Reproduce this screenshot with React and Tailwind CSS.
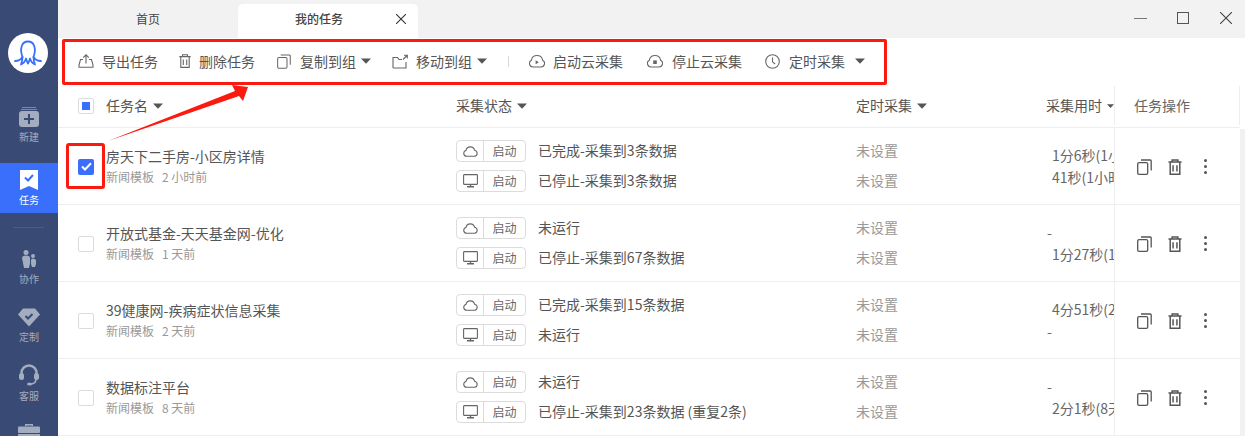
import React from "react";

const font = { fontFamily: '"Noto Sans CJK SC", "Noto Sans", sans-serif' };
const Caret = ({ className = "" }) => (
  <svg width="10" height="6" viewBox="0 0 10 6" className={className}><path d="M0 0.5h10L5 5.8z" fill="#555" /></svg>
);
const S = ({ w = 16, h = 16, vb = "0 0 16 16", children, className = "", c = "#666", sw = 1.1 }) => (
  <svg width={w} height={h} viewBox={vb} fill="none" stroke={c} strokeWidth={sw} className={`shrink-0 ${className}`}>{children}</svg>
);
const Export = () => <S><path d="M5 6.5H2.5L1 12v2.2h14V12l-1.5-5.5H11" /><path d="M8 10.5V2M5.2 4.6 8 1.8l2.8 2.8" /></S>;
const Trash = ({ w = 12, h = 14, c, sw }) => <S w={w} h={h} vb="0 0 12 14" c={c} sw={sw}><path d="M0.3 2.6h11.4M3.5 2.2V0.8h5v1.4M1.8 3v10.4h8.4V3M4.3 5.5v5.5M7.7 5.5v5.5" /></S>;
const Copy = ({ w = 15, h = 16, c, sw }) => <S w={w} h={h} vb="0 0 15 16" c={c} sw={sw}><rect x="0.7" y="3.7" width="10" height="11.6" rx="1.4" /><path d="M4 1h9.2a1 1 0 0 1 1 1v9.5" /></S>;
const Folder = () => <S w={16} h={15} vb="0 0 16 15"><path d="M1 14V3.5h4.5l1.5 2h3M1 14h13V8" /><path d="M11 5.5 15 1.5M12 1.2h3.3v3.3" /></S>;
const cloudPath = "M4 14A3.6 3.6 0 0 1 2.4 7.2 5.7 5.7 0 0 1 13.6 7.2 3.6 3.6 0 0 1 12 14z";
const CloudPlay = () => <S><path d={cloudPath} /><path d="M6.6 7.2v4l3.2-2z" fill="#666" stroke="none" /></S>;
const CloudStop = () => <S><path d={cloudPath} /><rect x="6.2" y="7.4" width="3.6" height="3.6" fill="#666" stroke="none" /></S>;
const Clock = () => <S w={15} h={15} vb="0 0 15 15"><circle cx="7.5" cy="7.5" r="6.8" /><path d="M7.5 3.5v4.3l2.6 2.2" /></S>;
const Cloud = () => <S w={15} h={11} vb="0 0 15 11"><path d="M3.6 10.3A3 3 0 0 1 3 4.4 4.4 4.4 0 0 1 11.6 4.2 3.1 3.1 0 0 1 11.6 10.3z" /></S>;
const Monitor = () => <S w={15} h={14} vb="0 0 15 14"><rect x="0.6" y="0.6" width="13.8" height="9.8" rx="0.6" /><path d="M4 12.8h7M7.5 10.5v2.3" strokeWidth="1.4" /></S>;

const Tool = ({ icon, label, caret, className, gap = "ml-2" }) => (
  <div className={`flex items-center ${className}`}>
    {icon}
    <span className={gap}>{label}</span>
    {caret && <Caret className="ml-[5px]" />}
  </div>
);

const NavItem = ({ icon, label, className = "", active }) => (
  <div className={`flex flex-col items-center shrink-0 ${active ? "bg-[#3a6ffb] text-white" : "text-[#a4acc0]"} ${className}`}>
    {icon}
    <span className="text-[10px] leading-[12px] mt-[4px]">{label}</span>
  </div>
);

const Pill = ({ kind, label }) => (
  <div className="flex items-center h-[22px] w-[70px] border border-[#dcdcdc] rounded-[4px] shrink-0">
    <div className="w-[27px] h-full flex items-center justify-center border-r border-[#dcdcdc]">{kind === "cloud" ? <Cloud /> : <Monitor />}</div>
    <div className="flex-1 text-center text-[12px] text-[#666]">{label}</div>
  </div>
);

const rows = [
  { name: "房天下二手房-小区房详情", sub: "新闻模板", age: "2 小时前", checked: true, s1: "已完成-采集到3条数据", s2: "已停止-采集到3条数据", t1: "1分6秒(1小时)", t2: "41秒(1小时)" },
  { name: "开放式基金-天天基金网-优化", sub: "新闻模板", age: "1 天前", s1: "未运行", s2: "已停止-采集到67条数据", t1: "-", t2: "1分27秒(1小时)" },
  { name: "39健康网-疾病症状信息采集", sub: "新闻模板", age: "2 天前", s1: "已完成-采集到15条数据", s2: "未运行", t1: "4分51秒(2小时)", t2: "-" },
  { name: "数据标注平台", sub: "新闻模板", age: "8 天前", s1: "未运行", s2: "已停止-采集到23条数据 (重复2条)", t1: "-", t2: "2分1秒(8天)" },
];

const TimeLine = ({ v }) => <div className={`h-[22px] leading-[22px] whitespace-nowrap ${v === "-" ? "pl-px" : "pl-[6px]"}`}>{v}</div>;

const Row = ({ r }) => (
  <div className="flex h-[77px] border-b border-[#eeeeee] text-[14px] text-[#555]">
    <div className="w-[28px] ml-[20px] flex items-center shrink-0 pt-[1px]">
      {r.checked ? (
        <div className="w-[16px] h-[16px] rounded-[2px] bg-[#3a6ffb] flex items-center justify-center">
          <svg width="11" height="9" viewBox="0 0 11 9" fill="none" stroke="#fff" strokeWidth="2"><path d="M1 4.5 4 7.5 10 1.2" /></svg>
        </div>
      ) : (
        <div className="w-[16px] h-[16px] rounded-[2px] border border-[#dcdcdc] bg-white" />
      )}
    </div>
    <div className="w-[350px] shrink-0 pt-[18px]">
      <div className="leading-[20px]">{r.name}</div>
      <div className="mt-[1px] text-[12px] leading-[20px] text-[#999] flex">
        <span>{r.sub}</span><span className="ml-[8px]">{r.age}</span>
      </div>
    </div>
    <div className="w-[400px] shrink-0 pt-[12px] flex flex-col gap-[8px]">
      <div className="flex items-center"><Pill kind="cloud" label="启动" /><span className="ml-[12px] relative -top-px">{r.s1}</span></div>
      <div className="flex items-center"><Pill kind="pc" label="启动" /><span className="ml-[12px] relative -top-px">{r.s2}</span></div>
    </div>
    <div className="w-[190px] shrink-0 pt-[12px] flex flex-col gap-[10px] text-[#999]">
      <div className="h-[20px] leading-[20px]">未设置</div>
      <div className="h-[20px] leading-[20px]">未设置</div>
    </div>
    <div className="w-[68px] shrink-0 overflow-hidden pt-[16px] flex flex-col text-[#666]">
      <TimeLine v={r.t1} />
      <TimeLine v={r.t2} />
    </div>
    <div className="w-[126px] shrink-0 bg-white border-l border-[#eeeeee] flex items-center pl-[22px] pt-[1px]">
      <Copy c="#555" sw={1.3} />
      <span className="ml-[16px] flex"><Trash w={14} h={16} c="#555" sw={1.3} /></span>
      <span className="ml-[22px] flex flex-col gap-[3px]">
        <i className="block w-[3px] h-[3px] bg-[#555] rounded-full" />
        <i className="block w-[3px] h-[3px] bg-[#555] rounded-full" />
        <i className="block w-[3px] h-[3px] bg-[#555] rounded-full" />
      </span>
    </div>
  </div>
);

export default function App() {
  return (
    <div className="relative w-[1245px] h-[436px] overflow-hidden flex bg-white" style={font}>
      <aside className="w-[58px] shrink-0 bg-[#394a74] flex flex-col items-stretch">
        <div className="mt-[33px] mx-[8px] w-[40px] h-[40px] shrink-0 rounded-full bg-white flex items-center justify-center">
          <svg width="28" height="26" viewBox="0 0 28 26" fill="none" stroke="#3a6ffb" strokeWidth="1.800" strokeLinejoin="round" strokeLinecap="round">
            <path d="M8.500 17C5.500 9 7.500 1.500 14 1.500S22.500 9 19.500 17" />
            <path d="M1 21c3.500 0 6-1.500 7.500-4 0 3-.5 5-1.500 7.500 2.500-1 4-3 5-6 .5 2 1.200 3.500 2 5 .8-1.500 1.500-3 2-5 1 3 2.500 5 5 6-1-2.500-1.500-4.500-1.500-7.500 1.500 2.500 4 4 7.500 4" />
          </svg>
        </div>
        <NavItem className="mt-[34px]" label="新建" icon={
          <svg width="20" height="20" viewBox="0 0 20 20" className="block"><path d="M3 0h14v1H3zM2 2h16v1H2z" fill="#7d88a6" /><rect y="4" width="20" height="16" rx="3" fill="#a4acc0" /><path d="M10 7v10M5 12h10" stroke="#394a74" strokeWidth="2" /></svg>
        } />
        <NavItem active className="mt-[20px] h-[50px] pt-[7px]" label="任务" icon={
          <svg width="18" height="20" viewBox="0 0 18 20" className="block"><path d="M0 0h18v20l-9-4-9 4z" fill="#fff" /><path d="M5 7.500 8 10.500 13 5" stroke="#3a6ffb" strokeWidth="2" fill="none" /></svg>
        } />
        <div className="mt-[14px] mx-[14px] h-px shrink-0 bg-[#4d5d85]" />
        <NavItem className="mt-[22px]" label="协作" icon={
          <svg width="14" height="18" viewBox="0 0 14 18" className="block mb-px" fill="#a4acc0"><circle cx="4" cy="2.500" r="2.500" /><path d="M0 8q0-2.500 4-2.500t4 2.500v5l-1 5H2l-1-5z" /><circle cx="11" cy="6" r="2" /><path d="M9 10q0-1.500 2-1.500t3 1.500v4l-1 3h-3l-1-3z" /></svg>
        } />
        <NavItem className="mt-[23px]" label="定制" icon={
          <svg width="22" height="19" viewBox="0 0 22 18" className="block"><path d="M5 0h12l5 6-11 12L0 6z" fill="#a4acc0" strokeLinejoin="round" /><path d="M7.500 7.500 10 10l4.500-4.500" stroke="#394a74" strokeWidth="2" fill="none" /></svg>
        } />
        <NavItem className="mt-[21px]" label="客服" icon={
          <svg width="20" height="22" viewBox="0 0 20 22" className="block" fill="none"><path d="M2.500 12V9a7.500 7.500 0 0 1 15 0v3" stroke="#a4acc0" strokeWidth="2.500" /><rect x="0" y="9" width="5" height="7" rx="2.500" fill="#a4acc0" /><rect x="15" y="9" width="5" height="7" rx="2.500" fill="#a4acc0" /><path d="M17 15c0 4-3 5-6 5" stroke="#a4acc0" strokeWidth="1.500" /><ellipse cx="10.500" cy="20" rx="2.500" ry="1.500" fill="#a4acc0" /></svg>
        } />
        <div className="mt-[21px] flex justify-center shrink-0">
          <svg width="22" height="20" viewBox="0 0 22 20" fill="#a4acc0" className="block"><path d="M7 3V1h8v2h-1.500V2.500h-5V3z" /><rect y="3.500" width="22" height="6.500" rx="1" /><rect y="11" width="22" height="9" /></svg>
        </div>
      </aside>

      <main className="flex-1 min-w-0 flex flex-col">
        <div className="h-[38px] bg-[#f2f2f2] flex items-end shrink-0 text-[12px] text-[#444]">
          <div className="w-[180px] h-[34px] flex items-center justify-center pb-[4px]">首页</div>
          <div className="w-[180px] h-[34px] bg-white rounded-t-[5px] flex items-center relative pb-[4px]">
            <span className="ml-[57px] font-medium">我的任务</span>
            <svg width="10" height="10" viewBox="0 0 10 10" stroke="#333" strokeWidth="1.100" className="ml-[53px]"><path d="M0 0l10 10M10 0 0 10" /></svg>
          </div>
          <div className="flex-1 h-full flex items-center justify-end pb-[2px]">
            <svg width="13" height="1" viewBox="0 0 13 1" className="mr-[30px]"><path d="M0 .5h13" stroke="#777" strokeWidth="1.500" /></svg>
            <svg width="12" height="12" viewBox="0 0 12 12" fill="none" stroke="#555" className="mr-[31px]"><rect x=".5" y=".5" width="11" height="11" /></svg>
            <svg width="12" height="12" viewBox="0 0 12 12" stroke="#444" strokeWidth="1.100" className="mr-[13px]"><path d="M0 0l12 12M12 0 0 12" /></svg>
          </div>
        </div>

        <div className="h-[48px] shrink-0 flex items-center pl-[20px] pb-[2px] text-[14px] text-[#555] whitespace-nowrap">
          <Tool icon={<Export />} label="导出任务" />
          <Tool className="ml-[21px]" icon={<Trash />} label="删除任务" />
          <Tool className="ml-[22px]" gap="ml-[9px]" icon={<Copy w={14} h={15} />} label="复制到组" caret />
          <Tool className="ml-[21px]" icon={<Folder />} label="移动到组" caret />
          <div className="ml-[21px] w-px h-[11px] bg-[#d8d8d8]" />
          <Tool className="ml-[20px]" icon={<CloudPlay />} label="启动云采集" />
          <Tool className="ml-[24px]" gap="ml-[9px]" icon={<CloudStop />} label="停止云采集" />
          <Tool className="ml-[23px]" gap="ml-[9px]" icon={<Clock />} label="定时采集" />
          <Caret className="ml-[10px]" />
        </div>

        <div className="flex flex-1 min-h-0">
          <div className="w-[1182px] shrink-0">
            <div className="flex h-[42px] pb-[2px] border-b border-[#eeeeee] text-[14px] text-[#555] items-center whitespace-nowrap">
              <div className="w-[28px] ml-[20px] shrink-0">
                <div className="w-[16px] h-[16px] rounded-[2px] border border-[#dcdcdc] flex items-center justify-center">
                  <div className="w-[8px] h-[8px] bg-[#3a6ffb]" />
                </div>
              </div>
              <div className="w-[350px] shrink-0 flex items-center">任务名<Caret className="ml-[5px]" /></div>
              <div className="w-[400px] shrink-0 flex items-center">采集状态<Caret className="ml-[5px]" /></div>
              <div className="w-[190px] shrink-0 flex items-center">定时采集<Caret className="ml-[5px]" /></div>
              <div className="w-[68px] shrink-0 flex items-center overflow-hidden">采集用时<Caret className="ml-[5px]" /></div>
              <div className="w-[126px] shrink-0 self-stretch border-l border-r border-[#eeeeee] flex items-center pl-[19px] text-[#666]">任务操作</div>
            </div>
            {rows.map((r) => <Row key={r.name} r={r} />)}
          </div>
          <div className="flex-1 mt-[43px] bg-[#f1f1f1]" />
        </div>
      </main>

      {/* annotation marks */}
      <div className="absolute left-[62px] top-[39px] w-[825px] h-[46px] border-[3px] border-[#fb1a0f] rounded-[2px]" />
      <div className="absolute left-[66px] top-[143px] w-[39px] h-[46px] border-[3px] border-[#fb1a0f] rounded-[3px]" />
      <svg className="absolute left-0 top-0 pointer-events-none" width="300" height="160" viewBox="0 0 300 160">
        <path d="M108 141 235 91 232 85 248 87 243 101 239 96z" fill="#fb1a0f" />
      </svg>
    </div>
  );
}
